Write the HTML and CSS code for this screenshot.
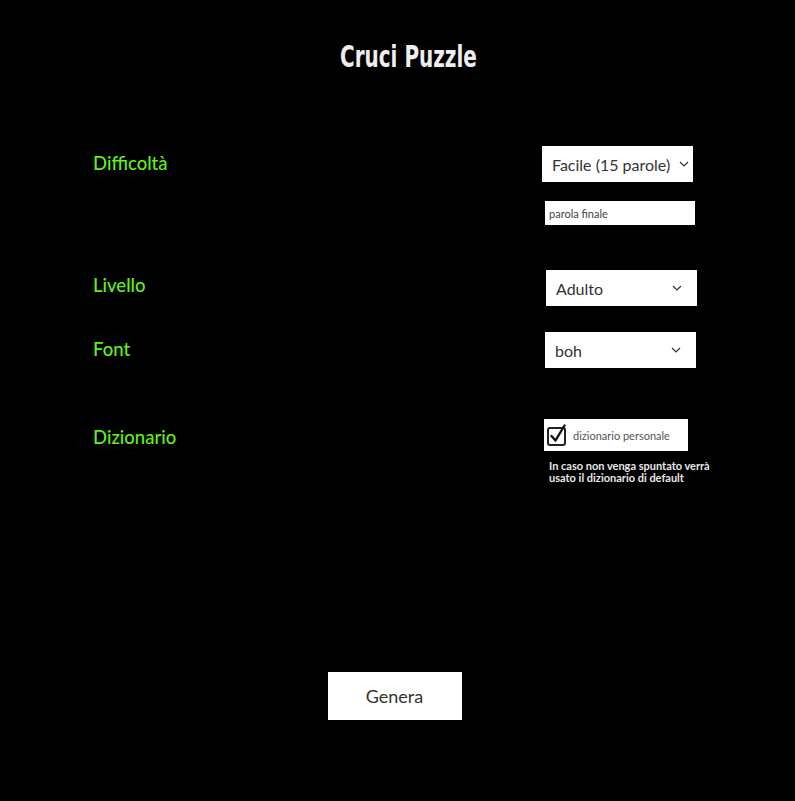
FILE: index.html
```html
<!DOCTYPE html>
<html lang="it">
<head>
<meta charset="utf-8">
<title>Cruci Puzzle</title>
<link rel="stylesheet" href="styles.css">
</head>
<body>
<header class="header"><h1 class="title">Cruci Puzzle</h1></header>
<main class="form">
  <div class="row row-diff">
    <label class="label">Difficoltà</label>
    <div class="controls">
      <div class="select sel-diff">
        <span class="select-text">Facile (15 parole)</span>
        <svg class="chev chev-tight" viewBox="0 0 10 6" width="10" height="6"><path d="M1 1l4 4 4-4" fill="none" stroke="#333" stroke-width="1.2"/></svg>
      </div>
      <div class="text-input"><span class="placeholder">parola finale</span></div>
    </div>
  </div>
  <div class="row row-liv">
    <label class="label">Livello</label>
    <div class="controls">
      <div class="select sel-liv">
        <span class="select-text">Adulto</span>
        <svg class="chev" viewBox="0 0 10 6" width="10" height="6"><path d="M1 1l4 4 4-4" fill="none" stroke="#333" stroke-width="1.2"/></svg>
      </div>
    </div>
  </div>
  <div class="row row-font">
    <label class="label">Font</label>
    <div class="controls">
      <div class="select sel-font">
        <span class="select-text">boh</span>
        <svg class="chev" viewBox="0 0 10 6" width="10" height="6"><path d="M1 1l4 4 4-4" fill="none" stroke="#333" stroke-width="1.2"/></svg>
      </div>
    </div>
  </div>
  <div class="row row-diz">
    <label class="label">Dizionario</label>
    <div class="controls">
      <div class="check">
        <svg class="checkbox" viewBox="0 0 22 22" width="22" height="22">
          <rect x="2" y="4" width="17" height="17" rx="2" fill="none" stroke="#222" stroke-width="2"/>
          <path d="M5.5 12l4 4.5 9-15" fill="none" stroke="#111" stroke-width="2.4" stroke-linecap="round" stroke-linejoin="round"/>
        </svg>
        <span class="check-text">dizionario personale</span>
      </div>
      <p class="note">In caso non venga spuntato verrà<br>usato il dizionario di default</p>
    </div>
  </div>
</main>
<div class="actions">
  <button class="btn">Genera</button>
</div>
</body>
</html>
```

FILE: styles.css
```css
* { box-sizing: border-box; }
html, body { margin: 0; padding: 0; }
body {
  background: #000;
  width: 795px;
  min-height: 801px;
  font-family: Lato, "Noto Sans", sans-serif;
}
.header {
  display: flex;
  justify-content: center;
  padding-top: 38px;
  padding-left: 21px;
}
.title {
  margin: 0;
  font-family: "DejaVu Sans", sans-serif;
  font-stretch: condensed;
  font-weight: 700;
  font-size: 30px;
  line-height: 38px;
  letter-spacing: 0;
  color: #eee;
  transform: scaleX(0.74);
}
.form {
  padding-left: 92px;
  margin-top: 70px;
}
.row {
  display: flex;
  align-items: flex-start;
}
.label {
  width: 453px;
  flex: none;
  color: #5ff01e;
  font-size: 18.5px;
  font-weight: 500;
  line-height: 34px;
  padding-left: 1px;
}
.controls {
  display: flex;
  flex-direction: column;
  align-items: flex-start;
}
.select {
  display: flex;
  align-items: center;
  justify-content: space-between;
  width: 151px;
  height: 36px;
  background: #fff;
  padding: 0 15px 0 10px;
  color: #333;
  font-size: 16px;
}
.chev { flex: none; }
.sel-diff { margin-left: -3px; padding-right: 4px; }
.text-input {
  margin-top: 19px;
  width: 150px;
  height: 24px;
  background: #fff;
  padding: 0 4px;
  display: flex;
  align-items: center;
}
.placeholder { font-size: 11px; color: #444; }
.row-liv { margin-top: 45px; }
.row-liv .label { line-height: 30px; }
.sel-liv { margin-left: 1px; }
.row-font { margin-top: 26px; }
.row-diz { margin-top: 51px; }
.row-diz .label { line-height: 36px; }
.check {
  margin-left: -1px;
  width: 144px;
  height: 32px;
  background: #fff;
  display: flex;
  align-items: center;
  padding-left: 2px;
  gap: 5px;
}
.checkbox { flex: none; }
.check-text { font-size: 11px; color: #555; }
.note {
  margin: 9px 0 0 4px;
  color: #e8e8e8;
  font-size: 11px;
  font-weight: 700;
  line-height: 12px;
}
.actions {
  display: flex;
  justify-content: center;
  margin-top: 188px;
  padding-right: 6px;
}
.btn {
  width: 134px;
  height: 48px;
  border: none;
  background: #fff;
  color: #333;
  font-family: Lato, "Noto Sans", sans-serif;
  font-size: 18px;
}
```
